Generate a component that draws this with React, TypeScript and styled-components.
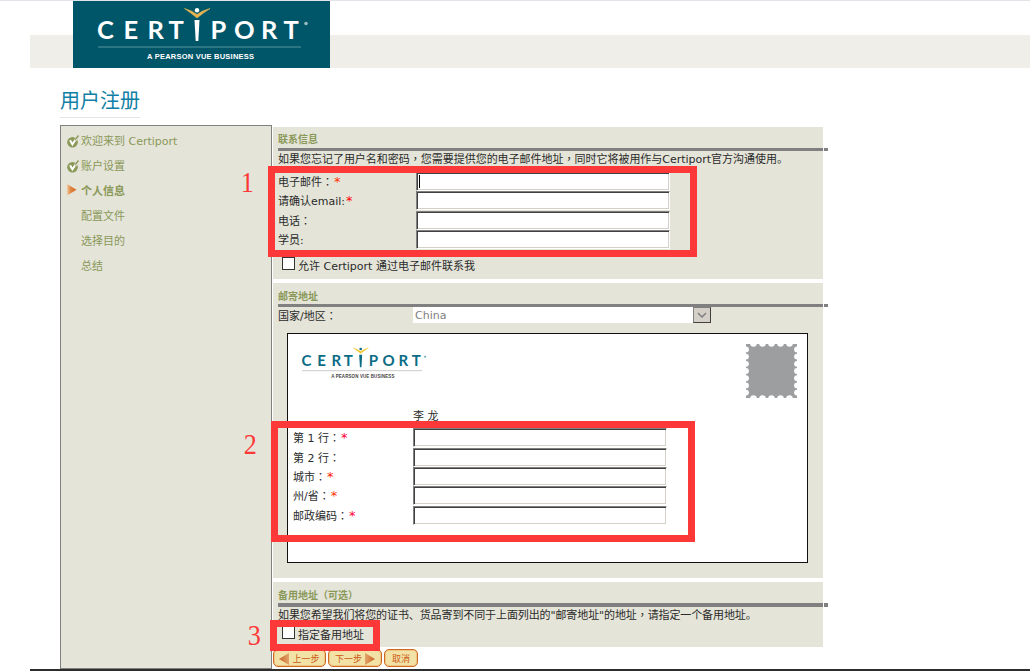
import styled, { createGlobalStyle } from "styled-components";
import { ReactNode } from "react";

const GlobalStyle = createGlobalStyle`
  * {
    box-sizing: border-box;
  }
  body {
    margin: 0;
    background-color: white;
    color: #2b2b2b;
    font-family: "DejaVu Sans", "Noto Sans CJK SC", sans-serif;
    font-size: 11px;
    overflow: hidden;
  }
`;

const Page = styled.div`
  position: relative;
  width: 1030px;
  height: 671px;
  overflow: hidden;
  display: flex;
  flex-direction: column;
  border-top: 1px solid #e1e4e8;
`;

const Header = styled.header`
  height: 67px;
  flex-shrink: 0;
  margin-left: 30px;
  padding-left: 43px;
  background: linear-gradient(white 34px, #efeee9 34px);
`;

const Brand = styled.div`
  width: 257px;
  height: 67px;
  background-color: #005669;

  svg {
    display: block;
  }
`;

const Title = styled.h1`
  width: 80px;
  height: 33px;
  flex-shrink: 0;
  margin: 17px 0 7px 60px;
  border-bottom: 1px solid #e5e5e5;
  color: #117fa5;
  font-family: "Noto Sans CJK SC", sans-serif;
  font-size: 20px;
  font-weight: 400;
  line-height: 29px;
  white-space: nowrap;
`;

const Body = styled.div`
  display: flex;
  height: 544px;
  flex-shrink: 0;
  margin-left: 60px;
`;

const Sidebar = styled.nav`
  width: 212px;
  height: 544px;
  padding: 3px 6px;
  border: 1px solid #808080;
  background-color: #e4e4d8;
`;

const Step = styled.div<{ $active?: boolean }>`
  display: grid;
  grid-template-columns: 14px 1fr;
  align-items: center;
  height: 25px;
  color: #8a9858;
  font-weight: ${(p) => (p.$active ? 700 : 400)};
  line-height: 25px;
  white-space: nowrap;
`;

const StepIcon = styled.span<{ $active?: boolean }>`
  display: flex;
  margin-bottom: ${(p) => (p.$active ? 3 : 0)}px;
`;

const Content = styled.main`
  width: 550px;
  margin-left: 1px;
  padding-top: 2px;
`;

const Panel = styled.section<{ $height: number }>`
  height: ${(p) => p.$height}px;
  margin-bottom: 4px;
  padding-left: 5px;
  background-color: #e4e4d8;
`;

const PanelTitle = styled.h2<{ $line?: number }>`
  height: 21px;
  margin: 0;
  color: #8a9858;
  font-size: 10px;
  font-weight: 700;
  line-height: ${(p) => p.$line ?? 25}px;
`;

const Rule = styled.div<{ $height?: number }>`
  width: 550px;
  height: ${(p) => p.$height ?? 3}px;
  background: linear-gradient(
    to right,
    #808080 545px,
    white 545px,
    white 546px,
    #808080 546px
  );
`;

const Note = styled.p<{ $height: number; $spacing: number }>`
  height: ${(p) => p.$height}px;
  margin: 0;
  letter-spacing: ${(p) => p.$spacing}px;
  line-height: 17px;
  white-space: nowrap;
`;

// the TC face centres full-width punctuation in its cell
const Punct = styled.span`
  font-family: "Noto Sans CJK TC", sans-serif;
  line-height: 1;
`;

const Star = styled.span<{ $color?: string }>`
  margin-left: 1px;
  color: ${(p) => p.$color ?? "#ff0000"};
  font-size: 13px;
  line-height: 1;
`;

const Fields = styled.div<{ $label: number; $rows: string }>`
  display: grid;
  grid-template-columns: ${(p) => p.$label}px 254px;
  grid-template-rows: ${(p) => p.$rows};
`;

const Label = styled.label`
  height: 19px;
  line-height: 21px;
  white-space: nowrap;
`;

const Input = styled.input`
  width: 254px;
  height: 19px;
  padding: 0 2px;
  border: 1px solid;
  border-color: #808080 white white #808080;
  border-radius: 0;
  outline: none;
  background-color: white;
  box-shadow: inset 1px 1px 0 #404040, inset -1px -1px 0 #d4d0c8;
`;

const FocusedField = styled.div`
  position: relative;
  height: 19px;
`;

const Caret = styled.div`
  position: absolute;
  top: 3px;
  left: 3px;
  width: 1px;
  height: 13px;
  background-color: black;
`;

const CheckRow = styled.div`
  display: flex;
  gap: 3px;
  padding-left: 4px;
  line-height: 20px;
  white-space: nowrap;
`;

const Checkbox = styled.input`
  appearance: none;
  width: 13px;
  height: 13px;
  margin: 0;
  border: 1px solid #333;
  background-color: white;
`;

const CountryRow = styled.div`
  display: grid;
  grid-template-columns: 135px 298px;
  height: 16px;
  line-height: 19px;
`;

const Select = styled.div`
  display: flex;
  justify-content: space-between;
  height: 16px;
  padding-left: 2px;
  background-color: white;
  color: #808080;
  line-height: 17px;
`;

const SelectButton = styled.span`
  display: flex;
  align-items: center;
  justify-content: center;
  width: 18px;
  height: 16px;
  border: 1px solid;
  border-color: #808080 #404040 #404040 #808080;
  background-color: #d4d0c8;
`;

const Envelope = styled.div`
  width: 521px;
  height: 230px;
  margin: 10px 0 0 9px;
  padding: 10px 10px 0 5px;
  border: 1px solid #111;
  background-color: white;
`;

const EnvelopeHead = styled.div`
  display: flex;
  align-items: flex-start;
  justify-content: space-between;
  height: 54px;
  padding-left: 8px;
`;

const Recipient = styled.div`
  height: 30px;
  padding: 10px 0 0 120px;
  line-height: 18px;
`;

const Buttons = styled.div`
  display: flex;
  gap: 2px;
  margin-top: -2px;
`;

const Button = styled.button<{ $width: number }>`
  display: flex;
  align-items: center;
  justify-content: center;
  gap: 3px;
  width: ${(p) => p.$width}px;
  height: 18px;
  padding: 1px 0 0;
  border: 1px solid #cc6a22;
  border-radius: 5px;
  background-color: #f2e2a6;
  box-shadow: inset 0 0 0 1px #f3c584;
  color: #cc5a16;
  font-family: "Noto Sans CJK SC", sans-serif;
  font-size: 9px;
  line-height: 14px;
  white-space: nowrap;

  svg {
    flex-shrink: 0;
  }
`;

const Footer = styled.div`
  height: 2px;
  flex-shrink: 0;
  margin-left: 30px;
  background-color: #2d2d2d;
`;

// red marks drawn over the form
const Mark = styled.div<{ $x: number; $y: number; $w: number; $h: number }>`
  position: absolute;
  left: ${(p) => p.$x}px;
  top: ${(p) => p.$y - 1}px;
  width: ${(p) => p.$w}px;
  height: ${(p) => p.$h}px;
  border: 7px solid #fd3838;
  pointer-events: none;
`;

const MarkNumber = styled.span<{ $x: number; $y: number }>`
  position: absolute;
  left: ${(p) => p.$x}px;
  top: ${(p) => p.$y - 1}px;
  color: #fd3838;
  font-family: "Liberation Serif", serif;
  font-size: 29px;
  line-height: 30px;
  transform: scaleX(0.9);
`;

interface LogoProps {
  width: number;
  height: number;
  viewBox: string;
  ink: string;
  accent: string;
  line: string;
  tagline: string;
}

function Logo({ width, height, viewBox, ink, accent, line, tagline }: LogoProps) {
  return (
    <svg width={width} height={height} viewBox={viewBox}>
      <text
        x="24 50.5 74.5 95.5 137.5 161 188 210.5"
        y="38"
        fill={ink}
        fontFamily="Lato"
        fontSize="25.5"
        fontWeight="700"
      >
        CERTPORT
      </text>
      <circle cx="124" cy="9.2" r="2.2" fill={ink} />
      <path
        d="M111.5 7.5Q119 9.5 124 13.5Q129 9.5 137 7.5Q130 12 124 17Q118 12 111.5 7.5Z"
        fill={accent}
        stroke={accent}
        strokeWidth="0.6"
      />
      <path d="M121.5 19L126.5 19L125.3 40L122.7 40Z" fill={ink} />
      <circle cx="233" cy="22.5" r="1.8" fill={ink} opacity="0.6" />
      <path d="M25 46H228" stroke={line} strokeWidth="1.5" />
      <text
        x="74"
        y="58"
        fill={tagline}
        fontFamily="Liberation Sans"
        fontSize="7.5"
        fontWeight="700"
        textLength="107"
      >
        A PEARSON VUE BUSINESS
      </text>
    </svg>
  );
}

function CheckIcon() {
  return (
    <svg width="13" height="13" viewBox="0 0 13 13">
      <circle cx="5.5" cy="7.3" r="5.3" fill="#8a9858" />
      <path d="M8 5.5L11.5 1" stroke="#e4e4d8" strokeWidth="2.6" />
      <path d="M3 5.2L5.4 9.3L8 5.5" fill="none" stroke="white" strokeWidth="2" />
      <path d="M8.3 4.6L11.5 0.5" stroke="#8a9858" strokeWidth="1.4" />
    </svg>
  );
}

function ArrowIcon() {
  return (
    <svg width="10" height="12" viewBox="0 0 10 12">
      <defs>
        <linearGradient id="step-arrow">
          <stop offset="0" stopColor="#f3cda6" />
          <stop offset="0.35" stopColor="#e08a48" />
          <stop offset="1" stopColor="#d8651c" />
        </linearGradient>
      </defs>
      <path d="M0 0L9.5 5.7L0 11.5Z" fill="url(#step-arrow)" />
    </svg>
  );
}

function Triangle({ next }: { next?: boolean }) {
  const id = next ? "next-arrow" : "back-arrow";
  return (
    <svg width="10" height="12" viewBox="0 0 10 12">
      <defs>
        <linearGradient id={id}>
          <stop offset="0" stopColor={next ? "#e2a469" : "#cb6526"} />
          <stop offset="1" stopColor={next ? "#cb6526" : "#e2a469"} />
        </linearGradient>
      </defs>
      <path d={next ? "M0 0L10 6L0 12Z" : "M10 0L0 6L10 12Z"} fill={`url(#${id})`} />
    </svg>
  );
}

function Stamp() {
  const across = [0, 1, 2, 3, 4];
  const down = [0, 1, 2, 3, 4, 5, 6];
  return (
    <svg width="51" height="54" viewBox="0 0 51 54">
      <path d="M0 0H51V54H0Z" fill="#9c9ea0" />
      <g fill="white">
        {across.map((i) => (
          <g key={i}>
            <circle cx={7.5 + i * 9} cy="-0.5" r="3.3" />
            <circle cx={7.5 + i * 9} cy="54.5" r="3.3" />
          </g>
        ))}
        {down.map((i) => (
          <g key={i}>
            <circle cx="0" cy={5.4 + i * 7.2} r="2.9" />
            <circle cx="51" cy={5.4 + i * 7.2} r="2.9" />
          </g>
        ))}
      </g>
    </svg>
  );
}

const steps: { name: string; icon?: ReactNode; active?: boolean }[] = [
  { name: "欢迎来到 Certiport", icon: <CheckIcon /> },
  { name: "账户设置", icon: <CheckIcon /> },
  { name: "个人信息", icon: <ArrowIcon />, active: true },
  { name: "配置文件" },
  { name: "选择目的" },
  { name: "总结" },
];

const addressRows = [
  { name: "第 1 行", star: "#ff0033" },
  { name: "第 2 行" },
  { name: "城市", star: "#ff1a00" },
  { name: "州/省", star: "#ff3300" },
  { name: "邮政编码", star: "#ff0033" },
];

function App() {
  return (
    <>
      <GlobalStyle />
      <Page>
        <Header>
          <Brand>
            <Logo
              width={257}
              height={67}
              viewBox="0 0 257 67"
              ink="white"
              accent="#e5b452"
              line="#3b808c"
              tagline="white"
            />
          </Brand>
        </Header>
        <Title>用户注册</Title>
        <Body>
          <Sidebar>
            {steps.map((step) => (
              <Step key={step.name} $active={step.active}>
                <StepIcon $active={step.active}>{step.icon}</StepIcon>
                <span>{step.name}</span>
              </Step>
            ))}
          </Sidebar>
          <Content>
            <Panel $height={152}>
              <PanelTitle>联系信息</PanelTitle>
              <Rule />
              <Note $height={21} $spacing={-0.02}>
                如果您忘记了用户名和密码<Punct>，</Punct>您需要提供您的电子邮件地址
                <Punct>，</Punct>同时它将被用作与Certiport官方沟通使用。
              </Note>
              <Fields $label={138} $rows="19px 20px 19px 27px">
                <Label>
                  电子邮件<Punct>：</Punct>
                  <Star $color="#ff3300">*</Star>
                </Label>
                <FocusedField>
                  <Input />
                  <Caret />
                </FocusedField>
                <Label>
                  请确认email:<Star>*</Star>
                </Label>
                <Input />
                <Label>
                  电话<Punct>：</Punct>
                </Label>
                <Input />
                <Label>学员:</Label>
                <Input />
              </Fields>
              <CheckRow>
                <Checkbox type="checkbox" />
                <span>允许 Certiport 通过电子邮件联系我</span>
              </CheckRow>
            </Panel>

            <Panel $height={295}>
              <PanelTitle $line={27}>邮寄地址</PanelTitle>
              <Rule />
              <CountryRow>
                <span>
                  国家/地区<Punct>：</Punct>
                </span>
                <Select>
                  China
                  <SelectButton>
                    <svg width="10" height="6" viewBox="0 0 10 6">
                      <path d="M1 1L5 5L9 1" fill="none" stroke="#808080" strokeWidth="1.5" />
                    </svg>
                  </SelectButton>
                </Select>
              </CountryRow>
              <Envelope>
                <EnvelopeHead>
                  <Logo
                    width={128}
                    height={38}
                    viewBox="23 0.85 216.6 64.3"
                    ink="#0b6c86"
                    accent="#f3c62c"
                    line="#c4c4c4"
                    tagline="#444"
                  />
                  <Stamp />
                </EnvelopeHead>
                <Recipient>李 龙</Recipient>
                <Fields $label={120} $rows="20px 19px 19px 20px 19px">
                  {addressRows.map((row) => [
                    <Label key={row.name}>
                      {row.name}
                      <Punct>：</Punct>
                      {row.star && <Star $color={row.star}>*</Star>}
                    </Label>,
                    <Input key={row.name + "-input"} />,
                  ])}
                </Fields>
              </Envelope>
            </Panel>

            <Panel $height={65}>
              <PanelTitle $line={27}>备用地址（可选）</PanelTitle>
              <Rule $height={4} />
              <Note $height={19} $spacing={-0.1}>
                如果您希望我们将您的证书、货品寄到不同于上面列出的"邮寄地址"的地址
                <Punct>，</Punct>请指定一个备用地址。
              </Note>
              <CheckRow>
                <Checkbox type="checkbox" />
                <span>指定备用地址</span>
              </CheckRow>
            </Panel>
            <Buttons>
              <Button $width={53}>
                <Triangle />
                上一步
              </Button>
              <Button $width={54}>
                下一步
                <Triangle next />
              </Button>
              <Button $width={34}>取消</Button>
            </Buttons>
          </Content>
        </Body>
        <Footer />

        <Mark $x={268} $y={166} $w={429} $h={91} />
        <Mark $x={271} $y={421} $w={424} $h={121} />
        <Mark $x={270} $y={620} $w={110} $h={31} />
        <MarkNumber $x={240} $y={167}>1</MarkNumber>
        <MarkNumber $x={243} $y={429}>2</MarkNumber>
        <MarkNumber $x={247} $y={620}>3</MarkNumber>
      </Page>
    </>
  );
}

export default App;
